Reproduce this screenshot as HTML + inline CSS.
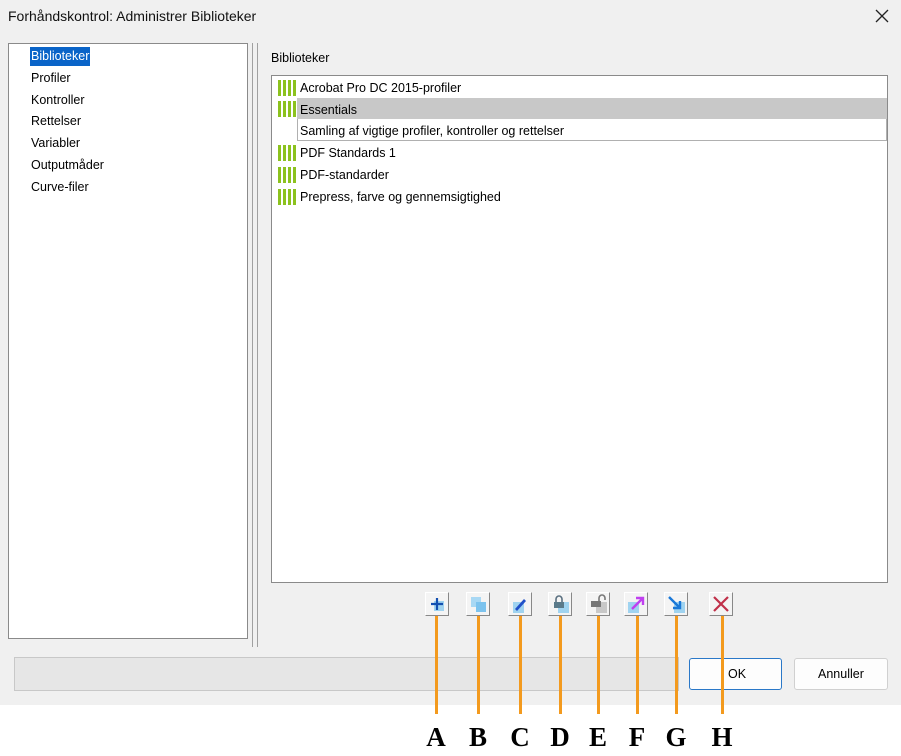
<!DOCTYPE html>
<html><head><meta charset="utf-8"><style>
*{margin:0;padding:0;box-sizing:border-box}
body{width:901px;height:756px;background:#fff;position:relative;overflow:hidden;font-family:"Liberation Sans",Arial,sans-serif;font-size:12px;color:#000}
.abs{position:absolute}
#dlg{left:0;top:0;width:901px;height:705px;background:#f0f0f0}
.t{position:absolute;white-space:nowrap}
.btn{position:absolute;top:592px;width:24px;height:24px;background:#f4f4f4;border:1px solid #fff;border-right-color:#888;border-bottom-color:#888}
.ln{position:absolute;top:616px;width:3px;height:98px;background:#f39a1e}
.let{position:absolute;top:722px;font-family:"Liberation Serif",serif;font-weight:bold;font-size:27px;width:30px;text-align:center}
.bars{position:absolute;left:278px;width:18px;height:16px}
.bars i{position:absolute;top:0;width:3px;height:16px;background:#8cc21e}
</style></head><body>
<div id="dlg" class="abs"></div>
<div class="t" style="left:8px;top:8px;font-size:14px;color:#111">Forhåndskontrol: Administrer Biblioteker</div>
<svg class="abs" style="left:875px;top:9px" width="14" height="14"><path d="M1 1l12 12M13 1L1 13" stroke="#222" stroke-width="1.3"/></svg>

<div class="abs" style="left:8px;top:43px;width:240px;height:596px;background:#fff;border:1px solid #8a8a8a"></div>
<div class="abs" style="left:30px;top:47px;width:60px;height:19px;background:#0a64c8"></div>
<div class="t" style="left:31px;top:49px;color:#fff;font-size:12.5px">Biblioteker</div>
<div class="t" style="left:31px;top:71px;font-size:12.5px">Profiler</div>
<div class="t" style="left:31px;top:93px;font-size:12.5px">Kontroller</div>
<div class="t" style="left:31px;top:114px;font-size:12.5px">Rettelser</div>
<div class="t" style="left:31px;top:136px;font-size:12.5px">Variabler</div>
<div class="t" style="left:31px;top:158px;font-size:12.5px">Outputmåder</div>
<div class="t" style="left:31px;top:180px;font-size:12.5px">Curve-filer</div>

<div class="abs" style="left:252px;top:43px;width:1px;height:604px;background:#a0a0a0"></div>
<div class="abs" style="left:257px;top:43px;width:1px;height:604px;background:#a0a0a0"></div>

<div class="t" style="left:271px;top:51px;font-size:12.5px">Biblioteker</div>
<div class="abs" style="left:271px;top:75px;width:617px;height:508px;background:#fff;border:1px solid #8a8a8a"></div>
<div class="abs" style="left:297px;top:98px;width:590px;height:21px;background:#c8c8c8"></div>
<div class="abs" style="left:297px;top:119px;width:590px;height:22px;border:1px solid #b0b0b0;border-top:none"></div>

<div class="bars" style="top:80px"><i style="left:0"></i><i style="left:5px"></i><i style="left:10px"></i><i style="left:15px"></i></div>
<div class="bars" style="top:101px"><i style="left:0"></i><i style="left:5px"></i><i style="left:10px"></i><i style="left:15px"></i></div>
<div class="bars" style="top:145px"><i style="left:0"></i><i style="left:5px"></i><i style="left:10px"></i><i style="left:15px"></i></div>
<div class="bars" style="top:167px"><i style="left:0"></i><i style="left:5px"></i><i style="left:10px"></i><i style="left:15px"></i></div>
<div class="bars" style="top:189px"><i style="left:0"></i><i style="left:5px"></i><i style="left:10px"></i><i style="left:15px"></i></div>
<div class="t" style="left:300px;top:81px;font-size:12.5px">Acrobat Pro DC 2015-profiler</div>
<div class="t" style="left:300px;top:103px;font-size:12.5px">Essentials</div>
<div class="t" style="left:300px;top:124px;font-size:12.5px">Samling af vigtige profiler, kontroller og rettelser</div>
<div class="t" style="left:300px;top:146px;font-size:12.5px">PDF Standards 1</div>
<div class="t" style="left:300px;top:168px;font-size:12.5px">PDF-standarder</div>
<div class="t" style="left:300px;top:190px;font-size:12.5px">Prepress, farve og gennemsigtighed</div>

<!-- toolbar -->
<div class="btn" style="left:425px"><svg width="22" height="22"><rect x="8" y="8" width="10" height="10" fill="#9fd3f0"/><path d="M5 11h12M11 5v12" stroke="#1450b0" stroke-width="2.2"/></svg></div>
<div class="btn" style="left:466px"><svg width="22" height="22"><rect x="4" y="4" width="10" height="10" fill="#a8d8f4"/><rect x="9" y="9" width="10" height="10" fill="#7cc3ee"/></svg></div>
<div class="btn" style="left:508px"><svg width="22" height="22"><rect x="4" y="9" width="11" height="11" fill="#9fd3f0"/><path d="M6 16l9-10 2 2-9 10z" fill="#2050c8"/></svg></div>
<div class="btn" style="left:548px"><svg width="22" height="22"><rect x="9" y="9" width="11" height="11" fill="#9fd3f0"/><path d="M7 9V6a3 3 0 016 0v3" stroke="#5a7080" stroke-width="1.6" fill="none"/><rect x="5" y="9" width="10" height="6" fill="#5a7a8a"/></svg></div>
<div class="btn" style="left:586px"><svg width="22" height="22"><rect x="9" y="9" width="11" height="11" fill="#c8c8c8"/><path d="M12 8V5a3 3 0 016 0v2" stroke="#777" stroke-width="1.6" fill="none"/><rect x="4" y="8" width="10" height="6" fill="#777"/></svg></div>
<div class="btn" style="left:624px"><svg width="22" height="22"><rect x="3" y="9" width="11" height="11" fill="#9fd3f0"/><path d="M7 16l11-11M11 5h7v7" stroke="#c040f0" stroke-width="2.4" fill="none"/></svg></div>
<div class="btn" style="left:664px"><svg width="22" height="22"><rect x="9" y="9" width="11" height="11" fill="#9fd3f0"/><path d="M4 4l11 11M8 15h7V8" stroke="#1a78d8" stroke-width="2.4" fill="none"/></svg></div>
<div class="btn" style="left:709px"><svg width="22" height="22"><path d="M4 4l14 14M18 4L4 18" stroke="#c0304a" stroke-width="2.2"/></svg></div>

<!-- bottom -->
<div class="abs" style="left:14px;top:657px;width:665px;height:34px;background:#e6e6e6;border:1px solid #c8c8c8"></div>
<div class="abs" style="left:689px;top:658px;width:93px;height:32px;background:#fdfdfd;border:1px solid #2a78c8;border-radius:3px"></div>
<div class="t" style="left:728px;top:667px;font-size:12.5px">OK</div>
<div class="abs" style="left:794px;top:658px;width:94px;height:32px;background:#fdfdfd;border:1px solid #d0d0d0;border-radius:3px"></div>
<div class="t" style="left:818px;top:667px;font-size:12.5px">Annuller</div>

<!-- orange lines + letters -->
<div class="ln" style="left:435px"></div><div class="let" style="left:421px">A</div>
<div class="ln" style="left:477px"></div><div class="let" style="left:463px">B</div>
<div class="ln" style="left:519px"></div><div class="let" style="left:505px">C</div>
<div class="ln" style="left:559px"></div><div class="let" style="left:545px">D</div>
<div class="ln" style="left:597px"></div><div class="let" style="left:583px">E</div>
<div class="ln" style="left:636px"></div><div class="let" style="left:622px">F</div>
<div class="ln" style="left:675px"></div><div class="let" style="left:661px">G</div>
<div class="ln" style="left:721px"></div><div class="let" style="left:707px">H</div>
</body></html>
